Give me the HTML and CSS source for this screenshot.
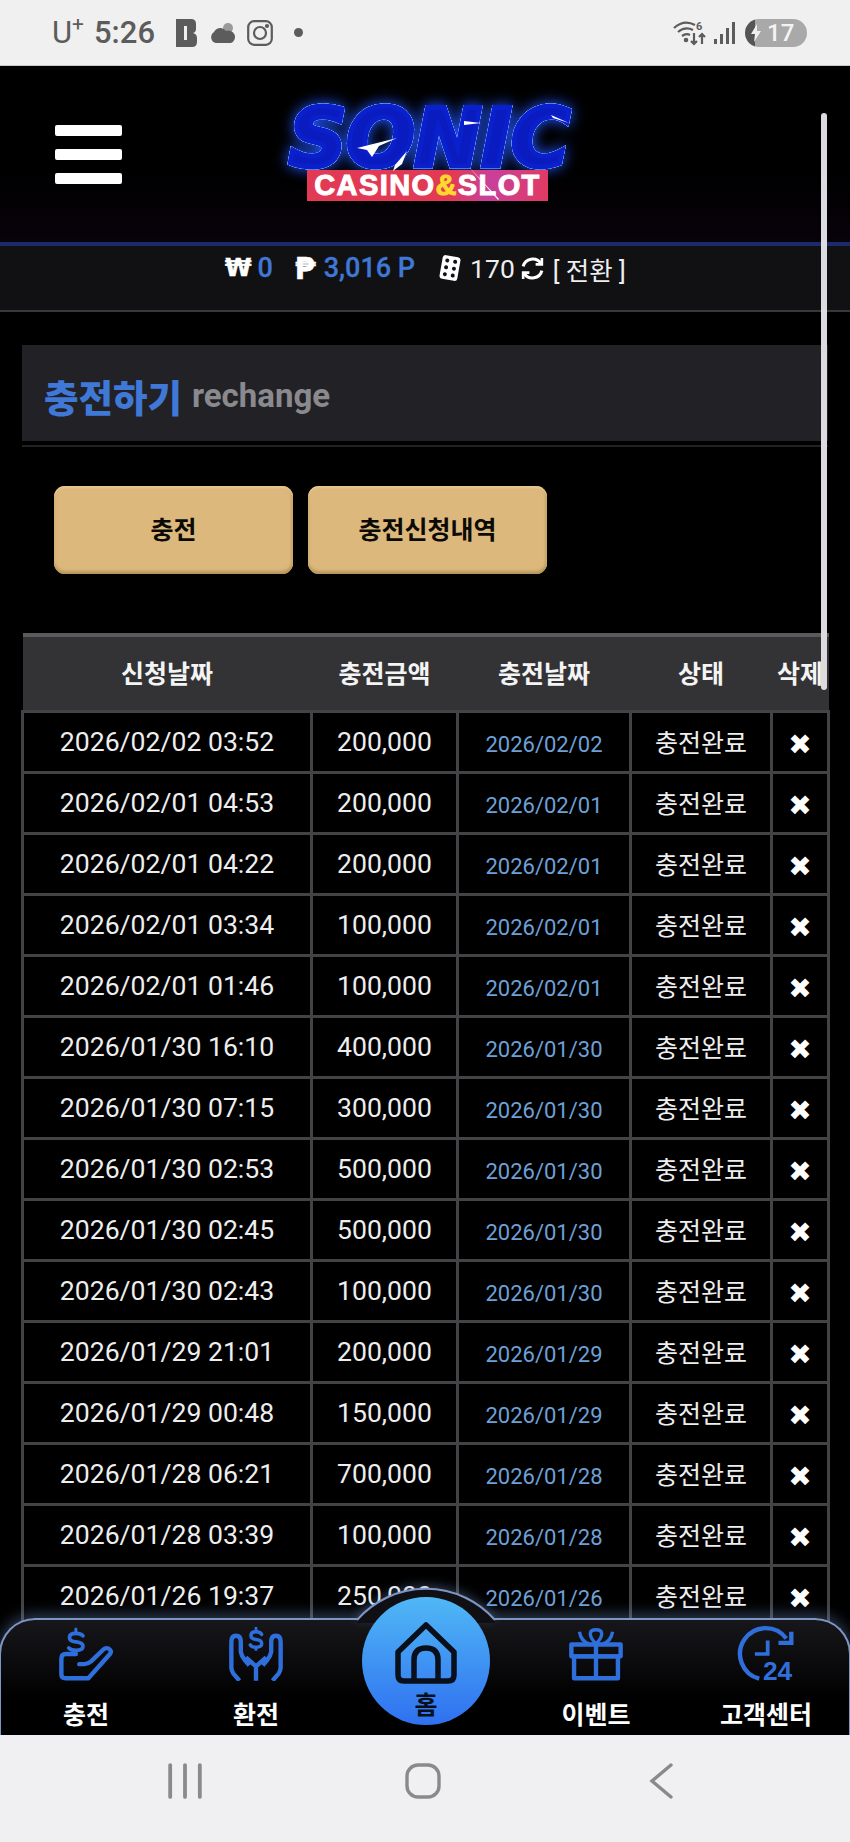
FILE: index.html
```html
<!DOCTYPE html>
<html lang="ko">
<head>
  <meta charset="utf-8">
  <title>충전하기</title>
  <link rel="stylesheet" href="styles.css">
</head>
<body>
  <div class="status_bar">
    <div class="status_left">
      <span class="carrier">U<sup>+</sup></span>
      <span class="clock">5:26</span>
      <svg class="st_b" viewBox="0 0 21 28"><path d="M0 0H15Q20 0 20 5V10Q20 13 17 14Q21 15 21 19V23Q21 28 16 28H0Z" fill="#5c5c5c"/><path d="M8 7H11V21H8Z" fill="#f0f0f0"/></svg>
      <svg class="st_cloud" viewBox="0 0 27 22"><circle cx="19" cy="6" r="5" fill="#9a9a9a"/><path d="M7 21A6 6 0 0 1 5 10A7 7 0 0 1 17 9A6 6 0 0 1 22 21Z" fill="#5c5c5c"/></svg>
      <svg class="st_insta" viewBox="0 0 26 26" fill="none" stroke="#5c5c5c" stroke-width="2.2"><rect x="1.2" y="1.2" width="23.6" height="23.6" rx="6"/><circle cx="13" cy="13" r="6"/><circle cx="20" cy="6" r="1" fill="#5c5c5c"/></svg>
      <span class="st_dot"></span>
    </div>
    <div class="status_right">
      <svg class="st_wifi" viewBox="0 0 34 26" fill="none" stroke="#5c5c5c" stroke-width="2.2"><path d="M1 8Q11 -1 22 5"/><path d="M5 12Q12 6 20 10"/><path d="M9 16Q13 13 17 15"/><circle cx="13" cy="20" r="1.2" fill="#5c5c5c"/><path d="M21 13V24M18 21L21 24L24 21"/><path d="M29 24V14M26 17L29 14L32 17"/><text x="23" y="10" class="st_six">6</text></svg>
      <svg class="st_signal" viewBox="0 0 22 22" fill="#5c5c5c"><rect x="0" y="17" width="3" height="5"/><rect x="6" y="12" width="3" height="10"/><rect x="12" y="6" width="3" height="16"/><rect x="18" y="0" width="3" height="22"/></svg>
      <div class="battery">
        <svg class="bolt" viewBox="0 0 10 18"><path d="M6 0L0 10H4L3 18L10 7H6Z" fill="#f0f0f0"/></svg>
        <span>17</span>
      </div>
    </div>
  </div>

  <div class="main">
    <header class="topo">
      <div class="menu_btn"><span></span><span></span><span></span></div>
      <div class="logo">
        <div class="logo_sonic">SONIC</div>
        <div class="logo_casino">CASINO<b>&amp;</b>SLOT</div>
        <svg class="logo_riscos" viewBox="0 0 285 98" fill="#fff"><path d="M70 45L110 35L92 43L85 54L80 47Z"/><path d="M108 62L120 48L115 61L106 68Z"/><path d="M177 18L194 20L177 22Z"/><path d="M264 12L282 20L266 15Z"/><path d="M182 64L183 65L212 96L211 97Z"/></svg>
      </div>
    </header>

    <div class="info_bar">
      <b class="moeda">₩</b><span class="azul sp_a">0</span>
      <b class="moeda moeda_p">₱</b><span class="azul sp_b">3,016 P</span>
      <svg class="dado" viewBox="0 0 24 26"><g transform="rotate(10 12 13)"><rect x="3" y="1" width="18" height="24" rx="3" fill="#fff"/><g fill="#111114"><circle cx="8" cy="6" r="2"/><circle cx="16" cy="6" r="2"/><circle cx="8" cy="13" r="2"/><circle cx="16" cy="13" r="2"/><circle cx="8" cy="20" r="2"/><circle cx="16" cy="20" r="2"/></g></g></svg>
      <span class="sp_c">170</span>
      <svg class="refresh" viewBox="0 0 24 24" fill="none" stroke="#fff" stroke-width="3"><path d="M3 10A9.5 9.5 0 0 1 20 7"/><path d="M21 14A9.5 9.5 0 0 1 4 17"/><path d="M21 2V8H15" stroke-width="2.5"/><path d="M3 22V16H9" stroke-width="2.5"/></svg>
      <span class="sp_d">[ 전환 ]</span>
    </div>

    <div class="titulo">
      <h2><strong>충전하기</strong> <small>rechange</small></h2>
    </div>

    <div class="botoes">
      <button class="btn_ouro">충전</button>
      <button class="btn_ouro">충전신청내역</button>
    </div>

    <table class="lista">
      <colgroup>
        <col class="c1"><col class="c2"><col class="c3"><col class="c4"><col class="c5">
      </colgroup>
      <thead>
        <tr><th>신청날짜</th><th>충전금액</th><th>충전날짜</th><th>상태</th><th>삭제</th></tr>
      </thead>
      <tbody>
        <tr><td>2026/02/02 03:52</td><td>200,000</td><td class="data">2026/02/02</td><td>충전완료</td><td class="del">✖</td></tr>
        <tr><td>2026/02/01 04:53</td><td>200,000</td><td class="data">2026/02/01</td><td>충전완료</td><td class="del">✖</td></tr>
        <tr><td>2026/02/01 04:22</td><td>200,000</td><td class="data">2026/02/01</td><td>충전완료</td><td class="del">✖</td></tr>
        <tr><td>2026/02/01 03:34</td><td>100,000</td><td class="data">2026/02/01</td><td>충전완료</td><td class="del">✖</td></tr>
        <tr><td>2026/02/01 01:46</td><td>100,000</td><td class="data">2026/02/01</td><td>충전완료</td><td class="del">✖</td></tr>
        <tr><td>2026/01/30 16:10</td><td>400,000</td><td class="data">2026/01/30</td><td>충전완료</td><td class="del">✖</td></tr>
        <tr><td>2026/01/30 07:15</td><td>300,000</td><td class="data">2026/01/30</td><td>충전완료</td><td class="del">✖</td></tr>
        <tr><td>2026/01/30 02:53</td><td>500,000</td><td class="data">2026/01/30</td><td>충전완료</td><td class="del">✖</td></tr>
        <tr><td>2026/01/30 02:45</td><td>500,000</td><td class="data">2026/01/30</td><td>충전완료</td><td class="del">✖</td></tr>
        <tr><td>2026/01/30 02:43</td><td>100,000</td><td class="data">2026/01/30</td><td>충전완료</td><td class="del">✖</td></tr>
        <tr><td>2026/01/29 21:01</td><td>200,000</td><td class="data">2026/01/29</td><td>충전완료</td><td class="del">✖</td></tr>
        <tr><td>2026/01/29 00:48</td><td>150,000</td><td class="data">2026/01/29</td><td>충전완료</td><td class="del">✖</td></tr>
        <tr><td>2026/01/28 06:21</td><td>700,000</td><td class="data">2026/01/28</td><td>충전완료</td><td class="del">✖</td></tr>
        <tr><td>2026/01/28 03:39</td><td>100,000</td><td class="data">2026/01/28</td><td>충전완료</td><td class="del">✖</td></tr>
        <tr><td>2026/01/26 19:37</td><td>250,000</td><td class="data">2026/01/26</td><td>충전완료</td><td class="del">✖</td></tr>
      </tbody>
    </table>

    <div class="scroll_thumb"></div>

    <!-- menu fixo de baixo, por cima da lista -->
    <nav class="menu_baixo">
      <svg class="bump" viewBox="0 0 140 36"><path d="M1 33A92 92 0 0 1 139 33V36H1Z" fill="#101014"/><path d="M1 33A92 92 0 0 1 139 33" fill="none" stroke="#7d96c4" stroke-width="2"/></svg>
      <a class="item">
        <svg class="icone" viewBox="175 48 160 160" fill="none" stroke="#2f6fdc" stroke-width="13" stroke-linecap="round" stroke-linejoin="round">
          <path d="M225 128H195Q182 128 182 141V188Q182 200 195 200H262L326 128Q333 118 322 112Q314 108 305 116L270 150Q262 157 250 158H235"/>
          <path d="M246 74Q240 67 225 67Q206 67 206 79Q206 90 225 92Q246 94 246 105Q246 117 225 117Q210 117 204 110" stroke-width="11"/>
          <path d="M225 54V66M225 117V126" stroke-width="9"/>
        </svg>
        <span>충전</span>
      </a>
      <a class="item">
        <svg class="icone" viewBox="685 48 160 160" fill="none" stroke="#2f6fdc" stroke-width="13" stroke-linejoin="round">
          <path d="M716 207L698 186Q692 178 692 168V92Q692 74 706 74Q720 74 720 92V122Q722 134 732 146L745 162"/>
          <path d="M814 207L832 186Q838 178 838 168V92Q838 74 824 74Q810 74 810 92V122Q808 134 798 146L785 162"/>
          <path d="M765 207V165L735 138M765 165L795 138"/>
          <path d="M782 70Q778 62 765 62Q750 62 750 73Q750 83 765 85Q782 87 782 97Q782 108 765 108Q752 108 748 101" stroke-width="10" stroke-linecap="round"/>
          <path d="M765 48V60M765 108V118" stroke-width="8"/>
        </svg>
        <span>환전</span>
      </a>
      <a class="item item_home">
        <div class="circulo">
          <svg class="casa" viewBox="0 0 62 62" fill="none" stroke="#0a0f1c" stroke-width="5.5" stroke-linejoin="round"><path d="M31 3L59 30V53Q59 59 53 59H9Q3 59 3 53V30Z"/><path d="M19 59V38Q19 26 31 26Q43 26 43 38V59"/></svg>
          <span>홈</span>
        </div>
      </a>
      <a class="item">
        <svg class="icone" viewBox="85 48 160 160" fill="none" stroke="#2f6fdc" stroke-width="13" stroke-linejoin="round">
          <path d="M100 135H230V200H100Z"/>
          <path d="M92 100H238V135H92Z"/>
          <path d="M165 100V200"/>
          <path d="M165 98C140 72 145 56 165 56C185 56 190 72 165 98Z" stroke-width="10"/>
          <path d="M116 62Q120 90 145 98M214 62Q210 90 185 98" stroke-width="10"/>
        </svg>
        <span>이벤트</span>
      </a>
      <a class="item">
        <svg class="icone icone_24" viewBox="595 48 160 160" fill="none" stroke="#2f6fdc" stroke-width="13">
          <path d="M735 82A76 76 0 1 0 655 201"/>
          <path d="M750 62V95H712"/>
          <path d="M680 88V128H642" stroke-width="11"/>
          <text x="666" y="205" class="vinte4">24</text>
        </svg>
        <span>고객센터</span>
      </a>
    </nav>
  </div>

  <div class="sys_nav">
    <svg class="sys_ico" viewBox="0 0 32 34" fill="none" stroke="#8a8a8c" stroke-width="3.6" stroke-linecap="round"><path d="M2 2V32M16 2V32M30 2V32"/></svg>
    <svg class="sys_ico" viewBox="0 0 36 36" fill="none" stroke="#8a8a8c" stroke-width="3.4"><rect x="2" y="2" width="32" height="32" rx="11"/></svg>
    <svg class="sys_ico" viewBox="0 0 24 36" fill="none" stroke="#8a8a8c" stroke-width="3.4" stroke-linecap="round"><path d="M22 2L3 18L22 34"/></svg>
  </div>
</body>
</html>
```
FILE: styles.css
```css
* {
  box-sizing: border-box;
}

body {
  margin: 0;
  width: 850px;
  height: 1842px;
  display: flex;
  flex-direction: column;
  overflow: hidden;
  background-color: #000;
  font-family: Roboto, "Noto Sans CJK KR", sans-serif;
  color: #eee;
}

/* barra do celular */
.status_bar {
  height: 66px;
  background-color: #f0f0f0;
  border-bottom: 1px solid #c8c8c8;
  display: flex;
  justify-content: space-between;
  align-items: center;
  padding: 0 43px 0 52px;
  color: #5c5c5c;
  flex: none;
}

.status_left,
.status_right {
  display: flex;
  align-items: center;
}

.carrier {
  font-size: 31px;
  width: 42px;
  line-height: 30px;
}

.carrier sup {
  font-size: 21px;
  line-height: 0;
  vertical-align: 12px;
}

.clock {
  font-size: 31px;
  font-weight: 500;
  width: 82px;
}

.st_b {
  width: 21px;
  height: 28px;
  margin-right: 12px;
}

.st_cloud {
  width: 27px;
  height: 22px;
  margin-right: 11px;
}

.st_insta {
  width: 26px;
  height: 26px;
  margin-right: 21px;
}

.st_dot {
  width: 9px;
  height: 9px;
  border-radius: 50%;
  background-color: #5c5c5c;
}

.st_wifi {
  width: 34px;
  height: 26px;
  margin-right: 7px;
}

.st_six {
  font-size: 11px;
  font-weight: 700;
  fill: #5c5c5c;
  stroke: none;
}

.st_signal {
  width: 22px;
  height: 22px;
  margin-right: 9px;
}

.battery {
  width: 62px;
  height: 28px;
  border-radius: 14px;
  background: linear-gradient(90deg, #555 16%, #a9a9a9 16%);
  display: flex;
  align-items: center;
  color: #f4f4f4;
  font-size: 24px;
  font-weight: 500;
  padding-left: 6px;
  gap: 6px;
}

.bolt {
  width: 10px;
  height: 18px;
}

/* site */
.main {
  position: relative;
  flex: 1;
  overflow: hidden;
  background-color: #000;
  padding: 0 22px;
}

.topo {
  height: 176px;
  margin: 0 -22px;
  padding-left: 55px;
  display: flex;
  align-items: center;
  background: linear-gradient(180deg, #000 60%, #08020a);
}

.menu_btn {
  width: 67px;
  display: flex;
  flex-direction: column;
  gap: 13px;
}

.menu_btn span {
  height: 11px;
  border-radius: 2px;
  background-color: #fff;
}

.logo {
  position: relative;
  width: 285px;
  margin-left: 165px;
  margin-bottom: 4px;
}

.logo_sonic {
  font-family: "DejaVu Sans", sans-serif;
  font-size: 80px;
  font-weight: 700;
  font-style: italic;
  line-height: 72px;
  height: 62px;
  text-align: center;
  white-space: nowrap;
  color: #0a1cc0;
  -webkit-text-stroke: 5px #0a20cc;
  filter: drop-shadow(0 0 0.6px #a8ccff) drop-shadow(0 0 0.6px #a8ccff) drop-shadow(0 0 0.6px #7fb2ff) drop-shadow(0 0 7px #1f54ff);
}

.logo_casino {
  position: relative;
  width: 241px;
  height: 31px;
  margin: 5px 0 0 20px;
  background: linear-gradient(100deg, #e23a55 60%, #c9409a 75%, #e23a60);
  font-family: "Liberation Sans", sans-serif;
  font-size: 29px;
  font-weight: 700;
  line-height: 31px;
  letter-spacing: 1.4px;
  text-align: center;
  white-space: nowrap;
  color: #fff;
  -webkit-text-stroke: 1px #fff;
}

.logo_casino b {
  color: #ffd92e;
  -webkit-text-stroke: 1px #ffd92e;
}

.logo_riscos {
  position: absolute;
  left: 0;
  top: 0;
  width: 285px;
  height: 98px;
}

.info_bar {
  height: 70px;
  margin: 0 -22px;
  padding: 0 0 20px 225px;
  background-color: #111114;
  border-top: 4px solid #1b2a6b;
  border-bottom: 2px solid #38383a;
  display: flex;
  align-items: center;
  font-size: 26.5px;
  white-space: nowrap;
}

.moeda {
  font-family: "DejaVu Sans", sans-serif;
  font-size: 24px;
  color: #fff;
  -webkit-text-stroke: 0.5px #fff;
}

.moeda_p {
  font-size: 30px;
}

.azul {
  color: #3f78d6;
  font-size: 27px;
  font-weight: 500;
  -webkit-text-stroke: 0.3px #3f78d6;
}

.sp_a {
  margin: 0 22px 0 6px;
}

.sp_b {
  margin: 0 23px 0 8px;
}

.dado {
  width: 24px;
  height: 26px;
  margin-right: 8px;
}

.sp_c {
  margin-right: 5px;
}

.refresh {
  width: 25px;
  height: 25px;
  margin-right: 8px;
}

.sp_d {
  font-size: 25.5px;
}

.titulo {
  margin-top: 33px;
  padding-bottom: 4px;
  border-bottom: 2px solid #222;
}

.titulo h2 {
  margin: 0;
  height: 96px;
  padding: 4px 0 0 22px;
  display: flex;
  align-items: center;
  gap: 10px;
  background-color: #222226;
  font-weight: 700;
}

.titulo strong {
  font-size: 37.5px;
  color: #3f78d6;
}

.titulo small {
  font-size: 33px;
  color: #8a8a8e;
}

.botoes {
  display: flex;
  gap: 15px;
  margin: 39px 0 59px 32px;
}

.btn_ouro {
  width: 239px;
  height: 88px;
  padding: 0 0 5px;
  border: none;
  border-radius: 11px;
  background-color: #dcb87c;
  box-shadow: inset 0 2px 2px #e8c890, inset 0 -3px 3px #b8965c, inset -2px 0 2px #c8a468;
  font-family: inherit;
  font-size: 25px;
  font-weight: 700;
  color: #0c0a06;
}

.lista {
  width: 806px;
  margin-left: -1px;
  table-layout: fixed;
  border-collapse: collapse;
}

.c1 { width: 289px; }
.c2 { width: 146px; }
.c3 { width: 173px; }
.c4 { width: 141px; }
.c5 { width: 57px; }

.lista th {
  height: 76px;
  padding: 0 0 3px;
  background-color: #333336;
  border-top: 4px solid #5a5a5c;
  font-size: 25px;
  font-weight: 700;
  color: #f4f4f4;
  white-space: nowrap;
}

.lista td {
  height: 61px;
  padding: 0 0 1px;
  border: 3px solid #434346;
  text-align: center;
  font-size: 26.6px;
  color: #eee;
  white-space: nowrap;
}

.lista td.data {
  padding-top: 6px;
  font-size: 22px;
  color: #6ea0d8;
}

.lista td:nth-child(4) {
  font-size: 25px;
}

.lista td.del {
  font-family: "DejaVu Sans", sans-serif;
  font-size: 28px;
  color: #fff;
  padding-top: 6px;
}

.scroll_thumb {
  position: absolute;
  right: 23px;
  top: 47px;
  width: 6px;
  height: 577px;
  border-radius: 3px;
  background-color: #dcdce0;
}

/* menu de baixo */
.menu_baixo {
  position: absolute;
  left: 0;
  right: 0;
  bottom: 0;
  height: 117px;
  display: grid;
  grid-template-columns: repeat(5, 170px);
  border: 2px solid #7d96c4;
  border-bottom: none;
  border-radius: 36px 36px 0 0;
  background: linear-gradient(180deg, #17171b, #000 70%);
  box-shadow: 0 -4px 14px rgba(130, 165, 230, 0.35);
  margin: 0 -1px;
}

.bump {
  position: absolute;
  left: 355px;
  top: -33px;
  width: 140px;
  height: 36px;
  filter: drop-shadow(0 -3px 5px rgba(130, 165, 230, 0.3));
}

.item {
  display: flex;
  flex-direction: column;
  align-items: center;
  padding-top: 7px;
  font-size: 25px;
  font-weight: 700;
  line-height: 34px;
  color: #fff;
}

.icone {
  width: 54px;
  height: 54px;
  margin-bottom: 18px;
  flex: none;
}

.icone_24 {
  overflow: visible;
}

.vinte4 {
  font-family: "Liberation Sans", sans-serif;
  font-size: 78px;
  font-weight: 700;
  fill: #2f6fdc;
  stroke: none;
}

.item_home {
  position: relative;
  padding-top: 0;
}

.circulo {
  width: 128px;
  height: 128px;
  margin-top: -23px;
  border-radius: 50%;
  background: linear-gradient(180deg, #50b8f6, #2f70f0);
  display: flex;
  flex-direction: column;
  align-items: center;
  padding-top: 25px;
  color: #0a0f1c;
  font-size: 25px;
  line-height: 28px;
}

.casa {
  width: 62px;
  height: 62px;
  margin-bottom: 8px;
  flex: none;
}

/* barra de navegacao do celular */
.sys_nav {
  height: 107px;
  flex: none;
  background-color: #f0eff1;
  display: grid;
  grid-template-columns: repeat(3, 238px);
  justify-items: center;
  align-items: center;
  padding: 0 0 0 66px;
}

.sys_ico {
  height: 36px;
  width: 36px;
  margin-bottom: 15px;
}
```
